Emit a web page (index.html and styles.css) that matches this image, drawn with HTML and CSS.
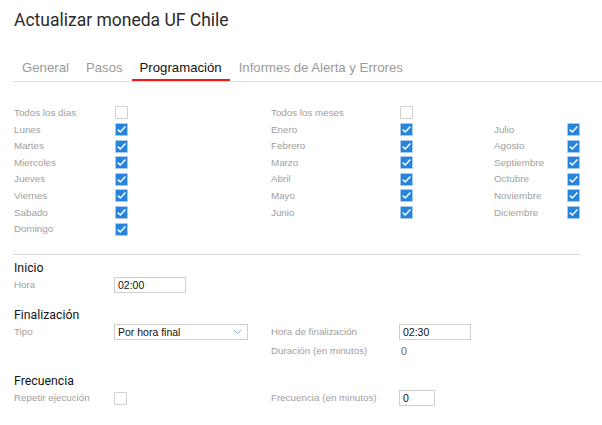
FILE: index.html
```html
<!DOCTYPE html>
<html lang="es">
<head>
<meta charset="utf-8">
<title>Actualizar moneda UF Chile</title>
<link rel="stylesheet" href="styles.css">
</head>
<body>
<div class="page">
  <h1 class="title">Actualizar moneda UF Chile</h1>
  <nav class="tabs">
    <span class="tab">General</span>
    <span class="tab">Pasos</span>
    <span class="tab active">Programación</span>
    <span class="tab">Informes de Alerta y Errores</span>
  </nav>

  <div class="schedule">
    <span class="lbl r1 c1">Todos los dias</span><span class="cb r1 c2"></span>
    <span class="lbl r2 c1">Lunes</span><span class="cb on r2 c2"></span>
    <span class="lbl r3 c1">Martes</span><span class="cb on r3 c2"></span>
    <span class="lbl r4 c1">Miercoles</span><span class="cb on r4 c2"></span>
    <span class="lbl r5 c1">Jueves</span><span class="cb on r5 c2"></span>
    <span class="lbl r6 c1">Viernes</span><span class="cb on r6 c2"></span>
    <span class="lbl r7 c1">Sabado</span><span class="cb on r7 c2"></span>
    <span class="lbl r8 c1">Domingo</span><span class="cb on r8 c2"></span>

    <span class="lbl r1 c3">Todos los meses</span><span class="cb r1 c4"></span>
    <span class="lbl r2 c3">Enero</span><span class="cb on r2 c4"></span>
    <span class="lbl r3 c3">Febrero</span><span class="cb on r3 c4"></span>
    <span class="lbl r4 c3">Marzo</span><span class="cb on r4 c4"></span>
    <span class="lbl r5 c3">Abril</span><span class="cb on r5 c4"></span>
    <span class="lbl r6 c3">Mayo</span><span class="cb on r6 c4"></span>
    <span class="lbl r7 c3">Junio</span><span class="cb on r7 c4"></span>

    <span class="lbl r2 c5">Julio</span><span class="cb on r2 c6"></span>
    <span class="lbl r3 c5">Agosto</span><span class="cb on r3 c6"></span>
    <span class="lbl r4 c5">Septiembre</span><span class="cb on r4 c6"></span>
    <span class="lbl r5 c5">Octubre</span><span class="cb on r5 c6"></span>
    <span class="lbl r6 c5">Noviembre</span><span class="cb on r6 c6"></span>
    <span class="lbl r7 c5">Diciembre</span><span class="cb on r7 c6"></span>
  </div>

  <div class="divider"></div>

  <section class="sec">
    <h2 class="sec-title">Inicio</h2>
    <div class="form">
      <span class="lbl">Hora</span>
      <span class="input w72">02:00</span>
    </div>
  </section>

  <section class="sec">
    <h2 class="sec-title">Finalización</h2>
    <div class="form">
      <span class="lbl">Tipo</span>
      <span class="select">Por hora final
        <svg class="chev" width="9" height="6" viewBox="0 0 9 6"><path d="M1 1.2 L4.5 4.6 L8 1.2" fill="none" stroke="#7ea9e6" stroke-width="1"/></svg>
      </span>
      <span class="lbl">Hora de finalización</span>
      <span class="input w72">02:30</span>
      <span></span><span></span>
      <span class="lbl">Duración (en minutos)</span>
      <span class="value">0</span>
    </div>
  </section>

  <section class="sec">
    <h2 class="sec-title">Frecuencia</h2>
    <div class="form">
      <span class="lbl">Repetir ejecución</span>
      <span class="cell"><span class="cb"></span></span>
      <span class="lbl">Frecuencia (en minutos)</span>
      <span class="input w36">0</span>
    </div>
  </section>
</div>
</body>
</html>
```

FILE: styles.css
```css
* { box-sizing: border-box; }
html, body { margin: 0; padding: 0; background: #fff; }
body { font-family: "Liberation Sans", Arial, sans-serif; color: #333; }

.page { padding: 10px 0 0 14px; width: 602px; }

.title {
  margin: 0;
  font-family: Roboto, "Liberation Sans", sans-serif;
  font-weight: 400;
  font-size: 17.5px;
  line-height: 20px;
  color: #2b2b2b;
}

.tabs {
  display: flex;
  gap: 1px;
  margin: 30px 0 0 -1px;
  padding-left: 1px;
  border-bottom: 1px solid #dedede;
}
.tab {
  font-size: 13.2px;
  line-height: 16px;
  padding: 0 8px 3px;
  color: #9a9a9a;
  border-bottom: 2px solid transparent;
}
.tab.active { color: #111; border-bottom-color: #f01818; }

.schedule {
  display: grid;
  grid-template-columns: 101px 156px 129px 94px 73px 13px;
  grid-template-rows: repeat(8, 16.6px);
  margin-top: 22.7px;
  align-items: center;
}
.r1 { grid-row: 1; } .r2 { grid-row: 2; } .r3 { grid-row: 3; } .r4 { grid-row: 4; }
.r5 { grid-row: 5; } .r6 { grid-row: 6; } .r7 { grid-row: 7; } .r8 { grid-row: 8; }
.c1 { grid-column: 1; } .c2 { grid-column: 2; } .c3 { grid-column: 3; }
.c4 { grid-column: 4; } .c5 { grid-column: 5; } .c6 { grid-column: 6; }

.lbl {
  font-size: 9.8px;
  color: #a0a0a0;
  white-space: nowrap;
  line-height: 12px;
}

.cb {
  display: block;
  width: 13px;
  height: 13px;
  border: 1px solid #d0d0d0;
  background: #fff;
  border-radius: 1px;
}
.cb.on {
  border-color: #a9c9ea;
  background-color: #2585de;
  background-image: url("data:image/svg+xml,%3Csvg xmlns='http://www.w3.org/2000/svg' width='11' height='11' viewBox='0 0 11 11'%3E%3Cpath d='M1.8 5.6 L4.3 8 L9.4 2.6' fill='none' stroke='white' stroke-width='1.5'/%3E%3C/svg%3E");
  background-repeat: no-repeat;
  background-position: center;
}

.divider {
  height: 1px;
  background: #d9d9d9;
  margin: 16.3px 22px 0 -1px;
}

.sec { margin-top: 5px; }
.sec + .sec { margin-top: 12px; }
.sec-title {
  margin: 0;
  font-family: Roboto, "Liberation Sans", sans-serif;
  font-weight: 400;
  font-size: 12.3px;
  line-height: 16px;
  color: #141414;
}

.form {
  display: grid;
  grid-template-columns: 100px 157px 128px auto;
  grid-auto-rows: 19px;
  align-items: center;
}

.input, .select {
  display: flex;
  align-items: center;
  height: 16px;
  border: 1px solid #cfcfcf;
  background: #fff;
  font-size: 10.5px;
  color: #111;
  padding-left: 3px;
}
.w72 { width: 72px; }
.w36 { width: 36px; }
.select { width: 134px; justify-content: space-between; padding-right: 5px; }
.chev { display: block; }
.value { font-size: 10.5px; color: #666; padding-left: 2px; }
.cell { display: block; }
```
